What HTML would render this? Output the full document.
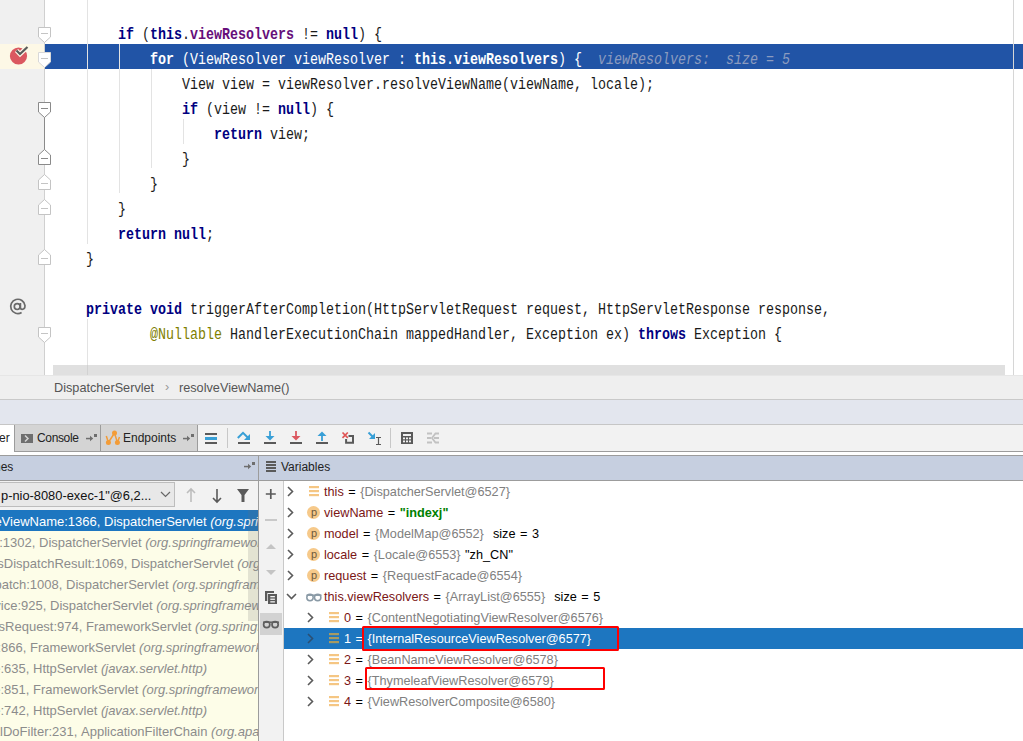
<!DOCTYPE html>
<html><head><meta charset="utf-8">
<style>
*{margin:0;padding:0;box-sizing:border-box}
html,body{width:1023px;height:741px;overflow:hidden;background:#fff;position:relative;font-family:"Liberation Sans",sans-serif}
.abs{position:absolute}
svg{position:absolute;overflow:visible}
#gutter{left:0;top:0;width:44px;height:375px;background:#f0f0f0}
#foldline{left:44px;top:0;width:1px;height:375px;background:#d0d0d0}
.code{position:absolute;left:54px;font-family:"Liberation Mono",monospace;font-size:16px;line-height:25px;height:25px;white-space:pre;color:#1a1a1a;transform-origin:0 0;transform:scaleX(0.8333)}
.kw{color:#000080;font-weight:bold}
.fld{color:#660e7a;font-weight:bold}
.ann{color:#808000}
.hint{color:#8b9bbf;font-style:italic}
.guide{position:absolute;width:1px;background:#e3e3e3}
#hl{left:45px;top:44px;width:978px;height:25px;background:#2154a6}
#hlg{left:0;top:44px;width:44px;height:25px;background:#fdf8e6}
#rmargin{left:1013px;top:0;width:1px;height:375px;background:#d6d6d6}
#hscroll{left:53px;top:365px;width:952px;height:10px;background:#e0e0e0}
#bread{left:0;top:375px;width:1023px;height:25px;background:#efefef;border-top:1px solid #e6e6e6;border-bottom:1px solid #c9c9c9;font-size:12.7px;color:#555}
#bgarea{left:0;top:400px;width:1023px;height:25px;background:#e3e6ee;border-bottom:1px solid #c6c6c6}
#tabbar{left:0;top:425px;width:1023px;height:27px;background:#f2f2f2;border-bottom:1px solid #9c9c9c}
#tabgap{left:0;top:452px;width:1023px;height:4px;background:#fff;border-bottom:1px solid #9c9c9c}
.hdr{position:absolute;top:456px;height:25px;background:#c6cfe0;border-bottom:1px solid #9c9c9c}
#vsep{left:258px;top:456px;width:1px;height:285px;background:#9c9c9c}
#frames{left:0;top:481px;width:258px;height:260px;background:#fdfde8}
#ddrow{left:0;top:481px;width:258px;height:29px;background:#f2f2f2}
#vars{left:284px;top:481px;width:739px;height:260px;background:#fff}
#vtool{left:259px;top:481px;width:25px;height:260px;background:#f2f2f2;border-right:1px solid #c9c9c9}
.frow{position:absolute;left:0;width:258px;height:21px;line-height:21px;font-size:13px;color:#8c8c8c;white-space:pre;overflow:hidden}
.frow i{font-style:italic}
.frow>span{top:0.5px}
.vrow{position:absolute;height:21px;line-height:21px;font-size:12.7px;white-space:pre;color:#000;word-spacing:1px}
.vn{color:#7b1616}
.vv{color:#808080}
.tabtxt{position:absolute;font-size:12px;line-height:14px;color:#222;white-space:pre}
</style></head><body>
<!-- EDITOR -->
<div class="abs" id="gutter"></div>
<div class="abs" id="hlg"></div>
<div class="abs" id="hl"></div>
<div class="abs" id="foldline"></div>
<div class="abs" id="rmargin"></div>
<!-- indent guides -->
<div class="guide" style="left:87px;top:0;height:44px"></div>
<div class="guide" style="left:87px;top:44px;height:25px;background:#e3e3e3"></div>
<div class="guide" style="left:87px;top:69px;height:175px"></div>
<div class="guide" style="left:119px;top:44px;height:25px;background:#e3e3e3"></div>
<div class="guide" style="left:119px;top:69px;height:124px"></div>
<div class="guide" style="left:151px;top:69px;height:99px"></div>
<div class="guide" style="left:183px;top:119px;height:25px"></div>
<div class="guide" style="left:87px;top:319px;height:56px"></div>

<div class="code" style="top:23px">        <span class="kw">if</span> (<span class="kw">this</span>.<span class="fld">viewResolvers</span> != <span class="kw">null</span>) {</div>
<div class="code" style="top:48px;color:#fff">            <b>for</b> (ViewResolver viewResolver : <b>this</b>.<b>viewResolvers</b>) {  <span class="hint">viewResolvers:  size = 5</span></div>
<div class="code" style="top:73px">                View view = viewResolver.resolveViewName(viewName, locale);</div>
<div class="code" style="top:98px">                <span class="kw">if</span> (view != <span class="kw">null</span>) {</div>
<div class="code" style="top:123px">                    <span class="kw">return</span> view;</div>
<div class="code" style="top:148px">                }</div>
<div class="code" style="top:173px">            }</div>
<div class="code" style="top:198px">        }</div>
<div class="code" style="top:223px">        <span class="kw">return</span> <span class="kw">null</span>;</div>
<div class="code" style="top:248px">    }</div>
<div class="code" style="top:298px">    <span class="kw">private</span> <span class="kw">void</span> triggerAfterCompletion(HttpServletRequest request, HttpServletResponse response,</div>
<div class="code" style="top:323px">            <span class="ann">@Nullable</span> HandlerExecutionChain mappedHandler, Exception ex) <span class="kw">throws</span> Exception {</div>

<!-- gutter icons -->
<svg width="1023" height="375" style="left:0;top:0">
  <!-- dark fold connector k3-k5 -->
  <line x1="44.5" y1="117" x2="44.5" y2="150" stroke="#8a8a8a" stroke-width="1"/>
  <!-- start markers -->
  <g fill="#fff" stroke="#c4c4c4" stroke-width="1">
    <path d="M38.5 27.5 H50.5 V37 L44.5 42.5 L38.5 37 Z"/>
    <path d="M38.5 52.5 H50.5 V62 L44.5 67.5 L38.5 62 Z" stroke="#d8d8d8"/>
    <path d="M38.5 327.5 H50.5 V337 L44.5 342.5 L38.5 337 Z"/>
    <path d="M38.5 102.5 H50.5 V112 L44.5 117.5 L38.5 112 Z" stroke="#8a8a8a"/>
    <path d="M38.5 164.5 H50.5 V155 L44.5 149.5 L38.5 155 Z" stroke="#8a8a8a"/>
    <path d="M38.5 189.5 H50.5 V180 L44.5 174.5 L38.5 180 Z"/>
    <path d="M38.5 214.5 H50.5 V205 L44.5 199.5 L38.5 205 Z"/>
    <path d="M38.5 264.5 H50.5 V255 L44.5 249.5 L38.5 255 Z"/>
  </g>
  <g stroke-width="1">
    <line x1="41" y1="33.5" x2="48" y2="33.5" stroke="#c4c4c4"/>
    <line x1="41" y1="58.5" x2="48" y2="58.5" stroke="#c4c4c4"/>
    <line x1="41" y1="333.5" x2="48" y2="333.5" stroke="#c4c4c4"/>
    <line x1="41" y1="108.5" x2="48" y2="108.5" stroke="#8a8a8a"/>
    <line x1="41" y1="158.5" x2="48" y2="158.5" stroke="#8a8a8a"/>
    <line x1="41" y1="183.5" x2="48" y2="183.5" stroke="#c4c4c4"/>
    <line x1="41" y1="208.5" x2="48" y2="208.5" stroke="#c4c4c4"/>
    <line x1="41" y1="258.5" x2="48" y2="258.5" stroke="#c4c4c4"/>
  </g>
  <!-- breakpoint -->
  <circle cx="18.5" cy="56" r="8.6" fill="#db5860"/>
  <path d="M16.5 50.5 L20 54 L27.5 47" fill="none" stroke="#fdf8e6" stroke-width="4.5"/>
  <path d="M16.5 50.5 L20 54 L27.5 47" fill="none" stroke="#5a5a5a" stroke-width="2.2"/>
</svg>
<svg width="40" height="40" style="left:0;top:290px"><g fill="none" stroke="#6a6a6a" stroke-width="1.7">
  <circle cx="17.2" cy="16.6" r="2.9"/>
  <path d="M20.4 13 V17.6 Q20.4 19.4 22.2 19.4 Q25 19.4 25 15.6 A7.2 7.2 0 1 0 21.6 22.6"/>
</g></svg>

<div class="abs" id="hscroll"></div>
<div class="guide" style="left:87px;top:365px;height:10px;background:#d2d2d2"></div>

<!-- BREADCRUMB -->
<div class="abs" id="bread"><span class="abs" style="left:54px;top:4px;line-height:16px">DispatcherServlet</span><span class="abs" style="left:165px;top:3px;line-height:16px;color:#999">›</span><span class="abs" style="left:179px;top:4px;line-height:16px">resolveViewName()</span></div>
<div class="abs" id="bgarea"></div>

<!-- TAB BAR -->
<div class="abs" id="tabbar"></div>
<div class="abs" id="tabgap"></div>
<div class="abs" style="left:0;top:425px;width:14px;height:30px;background:#fff"></div>
<div class="tabtxt" style="left:-1px;top:431px">er</div>
<div class="abs" style="left:14px;top:425px;width:87px;height:27px;background:#d4d4d4;border-left:1px solid #9c9c9c;border-bottom:1px solid #9c9c9c"></div>
<div class="abs" style="left:100px;top:425px;width:98px;height:27px;background:#d4d4d4;border-left:1px solid #9c9c9c;border-bottom:1px solid #9c9c9c;border-right:1px solid #9c9c9c"></div>
<div class="tabtxt" style="left:37px;top:431px;letter-spacing:-0.35px">Console</div>
<div class="tabtxt" style="left:123px;top:431px">Endpoints</div>
<svg width="1023" height="40" style="left:0;top:420px">
  <!-- console icon -->
  <rect x="21" y="14" width="12" height="9" fill="#6e6e6e"/>
  <path d="M25 15.5 L28 18.5 L25 21.5" fill="none" stroke="#d4d4d4" stroke-width="1.5"/>
  <!-- pin icons -->
  <g fill="#6e6e6e">
    <rect x="86" y="17.8" width="5" height="1.5"/>
    <path d="M90 15.8 L93.2 18.5 L90 21.2 Z"/>
    <rect x="94" y="14" width="3" height="3"/>
    <rect x="183" y="17.8" width="5" height="1.5"/>
    <path d="M187 15.8 L190.2 18.5 L187 21.2 Z"/>
    <rect x="191" y="14" width="3" height="3"/>
  </g>
  <!-- endpoints icon -->
  <g stroke="#f39c37" stroke-width="1.5" fill="none">
    <path d="M106.3 16 L108.4 22.5 L114.5 13.1 L117.4 22.5 L119.5 17"/>
  </g>
  <g fill="#f39c37">
    <circle cx="108.4" cy="22.5" r="2.5"/>
    <circle cx="114.5" cy="13.1" r="2.5"/>
    <circle cx="117.4" cy="22.5" r="2.5"/>
  </g>
  <!-- toolbar -->
  <line x1="197.5" y1="5" x2="197.5" y2="31" stroke="#9c9c9c"/>
  <rect x="205" y="13" width="12" height="2" fill="#5a5a5a"/>
  <rect x="205" y="17" width="12" height="3" fill="#389fd6"/>
  <rect x="205" y="22" width="12" height="2" fill="#5a5a5a"/>
  <line x1="227.5" y1="8" x2="227.5" y2="28" stroke="#c8c8c8"/>
  <!-- step over -->
  <rect x="238" y="22" width="12" height="2" fill="#5a5a5a"/>
  <path d="M237.8 18 L243 12.8 L248 17.8" fill="none" stroke="#389fd6" stroke-width="2"/>
  <path d="M244 19.9 L250 19.9 L250 14 Z" fill="#389fd6"/>
  <!-- step into -->
  <rect x="264" y="22" width="12" height="2" fill="#5a5a5a"/>
  <line x1="270" y1="11" x2="270" y2="17" stroke="#389fd6" stroke-width="1.8"/>
  <path d="M265.5 16 L274.5 16 L270 20.5 Z" fill="#389fd6"/>
  <!-- force step into -->
  <rect x="290" y="22" width="12" height="2" fill="#5a5a5a"/>
  <line x1="296" y1="11" x2="296" y2="17" stroke="#db5860" stroke-width="1.8"/>
  <path d="M291.5 16 L300.5 16 L296 20.5 Z" fill="#db5860"/>
  <!-- step out -->
  <rect x="316" y="22" width="12" height="2" fill="#5a5a5a"/>
  <line x1="322" y1="15" x2="322" y2="21" stroke="#389fd6" stroke-width="1.8"/>
  <path d="M317.5 16 L326.5 16 L322 11.5 Z" fill="#389fd6"/>
  <!-- drop frame -->
  <path d="M348.5 15.9 H353 V22.8 H346.1 V19" fill="none" stroke="#5a5a5a" stroke-width="2"/>
  <path d="M342.5 12.5 L347.8 17.8 M347.8 12.5 L342.5 17.8" stroke="#e05555" stroke-width="1.7"/>
  <!-- run to cursor -->
  <path d="M368.5 12.5 L373.5 17.5" stroke="#389fd6" stroke-width="2"/>
  <path d="M375 19 L375 13 L369 19 Z" fill="#389fd6"/>
  <path d="M376 17.5 H381 M378.5 17.5 V24.5 M376 24.5 H381" stroke="#5a5a5a" stroke-width="1.2" fill="none"/>
  <line x1="390.5" y1="8" x2="390.5" y2="28" stroke="#c8c8c8"/>
  <!-- calculator -->
  <rect x="401" y="12" width="12" height="12" fill="#5a5a5a"/>
  <rect x="403" y="14" width="8" height="2" fill="#f2f2f2"/>
  <g fill="#f2f2f2">
    <rect x="403" y="17.5" width="2" height="1.8"/><rect x="406" y="17.5" width="2" height="1.8"/><rect x="409" y="17.5" width="2" height="1.8"/>
    <rect x="403" y="20.5" width="2" height="1.8"/><rect x="406" y="20.5" width="2" height="1.8"/><rect x="409" y="20.5" width="2" height="1.8"/>
  </g>
  <!-- trace (disabled) -->
  <g stroke="#c2c2c2" stroke-width="1.8" fill="none">
    <path d="M427 13.5 H432 M427 18 H431 M427 22.5 H432"/>
    <path d="M439 13.5 H435.5 L432 18 L435.5 22.5 H439 M434 18 H439"/>
  </g>
</svg>

<!-- HEADERS -->
<div class="hdr" style="left:0;width:258px"></div>
<div class="hdr" style="left:259px;width:764px"></div>
<div class="tabtxt" style="left:-6px;top:460px;color:#222">nes</div>
<svg width="20" height="20" style="left:240px;top:455px"><g fill="#6e6e6e">
  <rect x="4" y="10.8" width="5" height="1.5"/>
  <path d="M8 8.8 L11.2 11.5 L8 14.2 Z"/>
  <rect x="12" y="7" width="3" height="3"/></g></svg>
<svg width="30" height="30" style="left:255px;top:455px">
  <rect x="11" y="6" width="10" height="2" fill="#5a5a5a"/>
  <rect x="11" y="9" width="10" height="2" fill="#5a5a5a"/>
  <rect x="11" y="12" width="10" height="2" fill="#5a5a5a"/>
  <rect x="11" y="15" width="10" height="2" fill="#5a5a5a"/>
</svg>
<div class="tabtxt" style="left:281px;top:460px;color:#222">Variables</div>

<!-- FRAMES -->
<div class="abs" id="frames"></div>
<div class="abs" id="ddrow"></div>
<div class="abs" style="left:-2px;top:482px;width:177px;height:25px;background:#e8e8e8;border:1px solid #bdbdbd"></div>
<div class="abs" style="left:1px;top:488px;font-size:12.85px;line-height:16px;color:#111;white-space:pre">p-nio-8080-exec-1"@6,2...</div>
<svg width="258" height="30" style="left:0;top:481px">
  <path d="M161 11 L165.5 15.5 L170 11" fill="none" stroke="#666" stroke-width="1.2"/>
  <path d="M191 21 V8 M187 12 L191 8 L195 12" fill="none" stroke="#bdbdbd" stroke-width="1.6"/>
  <path d="M217 8 V21 M213 17 L217 21 L221 17" fill="none" stroke="#5a5a5a" stroke-width="1.6"/>
  <path d="M237 8 H249 L244.5 14 V21 H241.5 V14 Z" fill="#5a5a5a"/>
</svg>
<div class="abs" style="left:0;top:510px;width:258px;height:21px;background:#1d76c0"></div>

<div class="frow" style="top:510px;color:#fff"><span class="abs" style="left:104px">DispatcherServlet <i>(org.springframework.web.servlet)</i></span><span class="abs" style="left:104px;transform:translateX(-100%)">resolveViewName:1366, </span></div>
<div class="frow" style="top:531px"><span class="abs" style="left:39px">DispatcherServlet <i>(org.springframework.web.servlet)</i></span><span class="abs" style="left:39px;transform:translateX(-100%)">render:1302, </span></div>
<div class="frow" style="top:552px"><span class="abs" style="left:131px">DispatcherServlet <i>(org.springframework.web.servlet)</i></span><span class="abs" style="left:131px;transform:translateX(-100%)">processDispatchResult:1069, </span></div>
<div class="frow" style="top:573px"><span class="abs" style="left:66px">DispatcherServlet <i>(org.springframework.web.servlet)</i></span><span class="abs" style="left:66px;transform:translateX(-100%)">doDispatch:1008, </span></div>
<div class="frow" style="top:594px"><span class="abs" style="left:50px">DispatcherServlet <i>(org.springframework.web.servlet)</i></span><span class="abs" style="left:50px;transform:translateX(-100%)">doService:925, </span></div>
<div class="frow" style="top:615px"><span class="abs" style="left:86px">FrameworkServlet <i>(org.springframework.web.servlet)</i></span><span class="abs" style="left:86px;transform:translateX(-100%)">processRequest:974, </span></div>
<div class="frow" style="top:636px"><span class="abs" style="left:30px">FrameworkServlet <i>(org.springframework.web.servlet)</i></span><span class="abs" style="left:30px;transform:translateX(-100%)">doGet:866, </span></div>
<div class="frow" style="top:657px"><span class="abs" style="left:33px">HttpServlet <i>(javax.servlet.http)</i></span><span class="abs" style="left:33px;transform:translateX(-100%)">service:635, </span></div>
<div class="frow" style="top:678px"><span class="abs" style="left:33px">FrameworkServlet <i>(org.springframework.web.servlet)</i></span><span class="abs" style="left:33px;transform:translateX(-100%)">service:851, </span></div>
<div class="frow" style="top:699px"><span class="abs" style="left:33px">HttpServlet <i>(javax.servlet.http)</i></span><span class="abs" style="left:33px;transform:translateX(-100%)">service:742, </span></div>
<div class="frow" style="top:720px"><span class="abs" style="left:81px">ApplicationFilterChain <i>(org.apache.catalina.core)</i></span><span class="abs" style="left:81px;transform:translateX(-100%)">internalDoFilter:231, </span></div>

<div class="abs" style="left:248px;top:510px;width:10px;height:111px;background:rgba(112,112,112,0.18)"></div>
<!-- VAR TOOLBAR -->
<div class="abs" id="vtool"></div>
<div class="abs" style="left:260px;top:613px;width:22px;height:22px;background:#d2d2d2"></div>
<svg width="25" height="260" style="left:259px;top:481px">
  <path d="M11.8 8 V18 M6.8 13 H16.8" stroke="#5a5a5a" stroke-width="1.7"/>
  <path d="M6 39 H18" stroke="#c4c4c4" stroke-width="1.8"/>
  <path d="M7 68 L12 63 L17 68 Z" fill="#c4c4c4"/>
  <path d="M7 89 L12 94 L17 89 Z" fill="#c4c4c4"/>
  <path d="M6 110 H15 V112 H8.3 V120 H6 Z" fill="#5a5a5a"/>
  <rect x="9" y="113" width="9" height="10" fill="#5a5a5a"/>
  <rect x="11.3" y="115" width="4.6" height="1.3" fill="#f2f2f2"/>
  <rect x="11.3" y="117.6" width="4.6" height="1.3" fill="#f2f2f2"/>
  <rect x="11.3" y="120.2" width="4.6" height="1.3" fill="#f2f2f2"/>
  <circle cx="7.7" cy="143.6" r="3.1" fill="none" stroke="#5e5e5e" stroke-width="1.7"/>
  <circle cx="16.1" cy="143.6" r="3.1" fill="none" stroke="#5e5e5e" stroke-width="1.7"/>
  <path d="M4 141.2 H20" stroke="#5e5e5e" stroke-width="1.5"/>
</svg>

<!-- VARIABLES -->
<div class="abs" id="vars"></div>
<div class="abs" style="left:284px;top:628px;width:739px;height:21px;background:#1d76c0"></div>
<svg width="739" height="260" style="left:284px;top:481px">
  <g fill="none" stroke="#5a5a5a" stroke-width="1.6">
    <path d="M4 6 L8.5 10.5 L4 15"/>
    <path d="M4 27 L8.5 31.5 L4 36"/>
    <path d="M4 48 L8.5 52.5 L4 57"/>
    <path d="M4 69 L8.5 73.5 L4 78"/>
    <path d="M4 90 L8.5 94.5 L4 99"/>
    <path d="M3 113 L7.5 117.5 L12 113"/>
    <path d="M24 132 L28.5 136.5 L24 141"/>
    <path d="M24 153 L28.5 157.5 L24 162" stroke="#2b4f73"/>
    <path d="M24 174 L28.5 178.5 L24 183"/>
    <path d="M24 195 L28.5 199.5 L24 204"/>
    <path d="M24 216 L28.5 220.5 L24 225"/>
  </g>
  <!-- this icon stripes -->
  <g fill="#f5c683">
    <rect x="25" y="5" width="10" height="2.2"/><rect x="25" y="9" width="10" height="2.2"/><rect x="25" y="13" width="10" height="2.2"/>
    <rect x="45" y="131" width="10" height="2.2"/><rect x="45" y="135" width="10" height="2.2"/><rect x="45" y="139" width="10" height="2.2"/>
    <rect x="45" y="173" width="10" height="2.2"/><rect x="45" y="177" width="10" height="2.2"/><rect x="45" y="181" width="10" height="2.2"/>
    <rect x="45" y="194" width="10" height="2.2"/><rect x="45" y="198" width="10" height="2.2"/><rect x="45" y="202" width="10" height="2.2"/>
    <rect x="45" y="215" width="10" height="2.2"/><rect x="45" y="219" width="10" height="2.2"/><rect x="45" y="223" width="10" height="2.2"/>
  </g>
  <g fill="#a69a63">
    <rect x="45" y="152" width="10" height="2.2"/><rect x="45" y="156" width="10" height="2.2"/><rect x="45" y="160" width="10" height="2.2"/>
  </g>
  <!-- p icons -->
  <g fill="#f6c98a">
    <circle cx="29.5" cy="31.5" r="6.5"/>
    <circle cx="29.5" cy="52.5" r="6.5"/>
    <circle cx="29.5" cy="73.5" r="6.5"/>
    <circle cx="29.5" cy="94.5" r="6.5"/>
  </g>
  <!-- glasses -->
  <g fill="none" stroke="#8a9aa6" stroke-width="1.5">
    <circle cx="26" cy="116.5" r="3.2"/><circle cx="33.7" cy="116.5" r="3.2"/><path d="M22.5 114.2 H37.5"/>
  </g>
</svg>
<div class="abs" style="left:307px;top:504px;width:14px;font-size:11px;line-height:16px;text-align:center;color:#6e5a3c">p</div>
<div class="abs" style="left:307px;top:525px;width:14px;font-size:11px;line-height:16px;text-align:center;color:#6e5a3c">p</div>
<div class="abs" style="left:307px;top:546px;width:14px;font-size:11px;line-height:16px;text-align:center;color:#6e5a3c">p</div>
<div class="abs" style="left:307px;top:567px;width:14px;font-size:11px;line-height:16px;text-align:center;color:#6e5a3c">p</div>

<div class="vrow" style="left:324px;top:482px"><span class="vn">this</span> = <span class="vv">{DispatcherServlet@6527}</span></div>
<div class="vrow" style="left:324px;top:503px"><span class="vn">viewName</span> = <b style="color:#008000">"indexj"</b></div>
<div class="vrow" style="left:324px;top:524px"><span class="vn">model</span> = <span class="vv">{ModelMap@6552}</span>  size = 3</div>
<div class="vrow" style="left:324px;top:545px"><span class="vn">locale</span> = <span class="vv">{Locale@6553}</span> "zh_CN"</div>
<div class="vrow" style="left:324px;top:566px"><span class="vn">request</span> = <span class="vv">{RequestFacade@6554}</span></div>
<div class="vrow" style="left:324px;top:587px"><span class="vn">this.viewResolvers</span> = <span class="vv">{ArrayList@6555}</span>  size = 5</div>
<div class="vrow" style="left:344px;top:608px"><span class="vn">0</span> = <span class="vv">{ContentNegotiatingViewResolver@6576}</span></div>
<div class="vrow" style="left:344px;top:629px;color:#fff">1 = {InternalResourceViewResolver@6577}</div>
<div class="vrow" style="left:344px;top:650px"><span class="vn">2</span> = <span class="vv">{BeanNameViewResolver@6578}</span></div>
<div class="vrow" style="left:344px;top:671px"><span class="vn">3</span> = <span class="vv">{ThymeleafViewResolver@6579}</span></div>
<div class="vrow" style="left:344px;top:692px"><span class="vn">4</span> = <span class="vv">{ViewResolverComposite@6580}</span></div>

<!-- red boxes -->
<div class="abs" style="left:362px;top:626px;width:257px;height:25px;border:2px solid #ff0000;border-bottom-width:2.5px;border-radius:1.5px"></div>
<div class="abs" style="left:365px;top:667px;width:240px;height:23px;border:2px solid #ff0000;border-radius:1.5px"></div>

<div class="abs" id="vsep"></div>
</body></html>
